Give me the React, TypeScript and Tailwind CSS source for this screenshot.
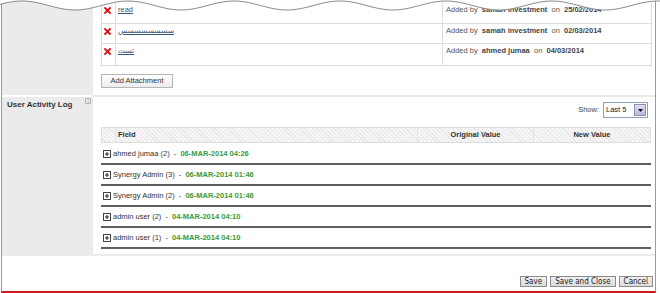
const attachments = [
  { name: "read", by: "samah investment", on: "25/02/2014", h: "h-[21px]" },
  { name: "سسسسسسسس", by: "samah investment", on: "02/03/2014", h: "h-[20px]" },
  { name: "تست", by: "ahmed jumaa", on: "04/03/2014", h: "h-[21px]" },
];

const activity = [
  { who: "ahmed jumaa (2)", when: "06-MAR-2014 04:26" },
  { who: "Synergy Admin (3)", when: "06-MAR-2014 01:46" },
  { who: "Synergy Admin (2)", when: "06-MAR-2014 01:46" },
  { who: "admin user (2)", when: "04-MAR-2014 04:10" },
  { who: "admin user (1)", when: "04-MAR-2014 04:10" },
];

function TornEdge() {
  // torn-paper top edge drawn over the page
  const pts: string[] = [];
  for (let x = 0; x <= 660; x += 4) {
    const y = 5.5 - 4.5 * Math.cos((2 * Math.PI * (x - 22)) / 106);
    pts.push(`${x},${y.toFixed(2)}`);
  }
  const line = pts.join(" L");
  return (
    <svg
      className="pointer-events-none absolute left-0 top-0"
      width="660"
      height="14"
      viewBox="0 0 660 14"
    >
      <path d={`M0,0 L${line} L660,0 Z`} fill="#fff" />
      <path d={`M${line}`} fill="none" stroke="#8c8c8c" strokeWidth="1" />
    </svg>
  );
}

function RedX() {
  return (
    <svg width="7" height="7" viewBox="0 0 7 7">
      <path d="M1 1 L6 6 M6 1 L1 6" stroke="#dd1111" strokeWidth="1.8" strokeLinecap="square" />
    </svg>
  );
}

function PlusBox() {
  return (
    <svg width="8" height="8" viewBox="0 0 8 8" className="shrink-0">
      <rect x="0.5" y="0.5" width="7" height="7" fill="#fff" stroke="#444" />
      <path d="M2 4 H6 M4 2 V6" stroke="#222" strokeWidth="1" />
    </svg>
  );
}

export default function App() {
  return (
    <div className="relative h-[293px] w-[660px] overflow-hidden bg-white font-['Liberation_Sans',Arial,sans-serif] text-[7.5px] leading-[10px] text-[#333]">
      <div className="ml-px flex h-[293px] w-[655px] flex-col border-x border-b-2 border-x-[#9a9a9a] border-b-[#cc1a1a]">
        {/* attachments */}
        <section className="flex h-[95px]">
          <div className="w-[91px] shrink-0 bg-[#ebebeb]" />
          <div className="flex-1 pl-[8px] pt-[3px]">
            <div className="w-[551px] border-x border-b border-[#dcdcdc]">
              {attachments.map((a, i) => (
                <div
                  key={i}
                  className={`flex ${a.h} ${i < attachments.length - 1 ? "border-b border-[#dcdcdc]" : ""}`}
                >
                  <div className="w-[14px] border-r border-[#dcdcdc] pl-[2px] pt-[4px]">
                    <RedX />
                  </div>
                  <div className="w-[327px] border-r border-[#dcdcdc] pl-[2px] pt-[2px]">
                    <span
                      dir="auto"
                      className="text-[#3b5577] underline font-['Liberation_Sans','DejaVu_Sans',sans-serif]"
                    >
                      {a.name}
                    </span>
                  </div>
                  <div className="flex-1 whitespace-pre pl-[3px] pt-[2px] text-[#555]">
                    {"Added by  "}
                    <b className="text-[#444]">{a.by}</b>
                    {"  on  "}
                    <b className="text-[#444]">{a.on}</b>
                  </div>
                </div>
              ))}
            </div>
            <button
              type="button"
              className="mt-[8px] h-[14px] w-[72px] border border-[#b5b5b5] bg-[linear-gradient(#ffffff,#ececec)] text-[7.5px] leading-[12px] text-[#333]"
            >
              Add Attachment
            </button>
          </div>
        </section>

        <div className="flex h-[2px]">
          <div className="w-[91px] bg-white" />
          <div className="flex-1 bg-[#e9e9e9]" />
        </div>

        {/* user activity log */}
        <section className="flex h-[157px]">
          <div className="flex w-[91px] shrink-0 items-start justify-between bg-[#ebebeb] pl-[5px] pr-[2px] pt-[3px]">
            <span className="text-[8px] font-bold text-[#333]">User Activity Log</span>
            <span className="mt-[-2px] flex h-[6px] w-[6px] items-center justify-center rounded-[1px] border border-[#b0b0b0] bg-[#f4f4f4] text-[5px] leading-none text-[#666]">
              i
            </span>
          </div>
          <div className="flex-1 pl-[8px]">
            <div className="mr-[7px] mt-[5px] flex h-[16px] items-center justify-end gap-[4px]">
              <span className="text-[#444]">Show:</span>
              <div className="flex h-[16px] w-[45px] items-center border border-[#8da2bf] bg-white">
                <span className="flex-1 pl-[2px] text-[#222]">Last 5</span>
                <span className="mr-px flex h-[12px] w-[12px] items-center justify-center border border-[#8a8fb0] bg-[linear-gradient(#dcdff2,#b9bcd9)]">
                  <svg width="5" height="3" viewBox="0 0 5 3">
                    <path d="M0 0 H5 L2.5 3 Z" fill="#111" />
                  </svg>
                </span>
              </div>
            </div>

            <div className="mt-[9px] flex h-[16px] w-[550px] border border-[#dedede] bg-[repeating-linear-gradient(45deg,#f6f6f6_0px,#f6f6f6_2px,#e7e7e7_2px,#e7e7e7_3px)] font-bold text-[#333]">
              <div className="w-[14px] border-r border-[#e2e2e2]" />
              <div className="flex w-[302px] items-center border-r border-[#e2e2e2] pl-[2px]">Field</div>
              <div className="flex w-[116px] items-center justify-center border-r border-[#e2e2e2]">
                Original Value
              </div>
              <div className="flex flex-1 items-center justify-center">New Value</div>
            </div>

            <div className="mt-px w-[550px]">
              {activity.map((r, i) => (
                <div
                  key={i}
                  className="flex h-[21px] items-center gap-[2px] border-b-2 border-[#5e5e5e] pl-[2px] pt-px whitespace-pre"
                >
                  <PlusBox />
                  <span className="text-[#333]">{r.who}</span>
                  <span className="text-[#333]">{" - "}</span>
                  <b className="text-[#3a9a3a]">{r.when}</b>
                </div>
              ))}
            </div>
          </div>
        </section>

        <div className="h-[2px] bg-[#ececec]" />

        {/* footer actions */}
        <footer className="flex flex-1 items-end justify-end gap-[3px] pb-[4px] pr-[2px] font-['DejaVu_Sans_Condensed','DejaVu_Sans',sans-serif] text-[8px] leading-[9px] text-[#222]">
          {["Save", "Save and Close", "Cancel"].map((b) => (
            <button
              key={b}
              type="button"
              className="h-[11px] border border-[#8c8c8c] bg-[linear-gradient(#f0f0f0,#dcdcdc)] px-[4px] leading-[9px]"
            >
              {b}
            </button>
          ))}
        </footer>
      </div>
      <TornEdge />
    </div>
  );
}
